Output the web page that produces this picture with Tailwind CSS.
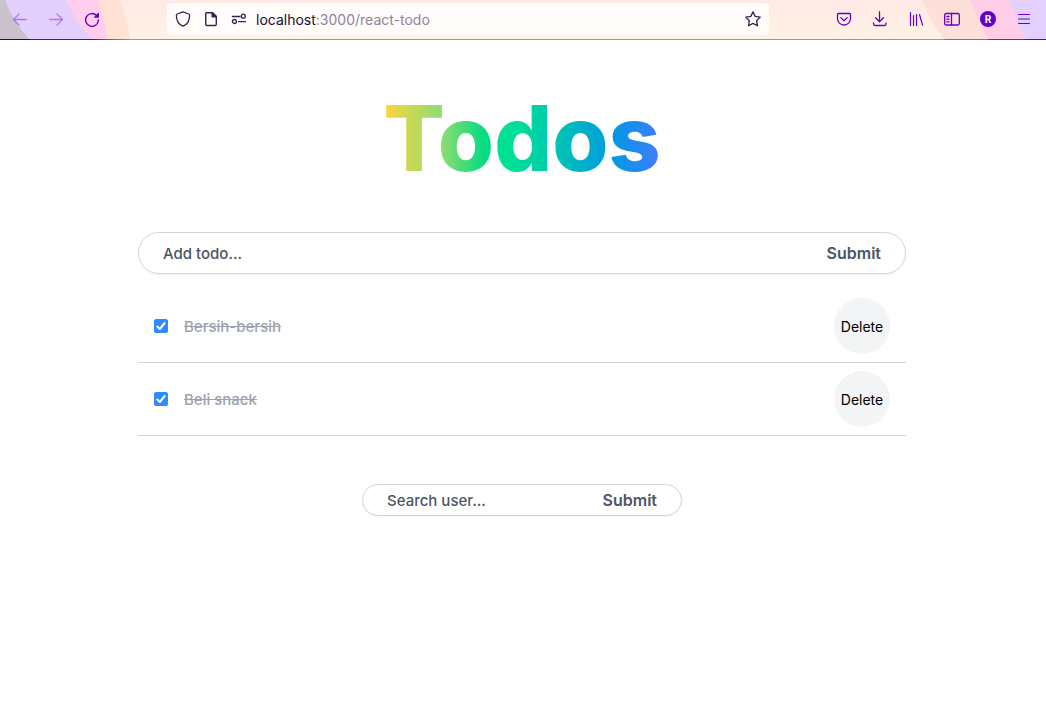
<!DOCTYPE html>
<html lang="en">
<head>
<meta charset="utf-8">
<meta name="viewport" content="width=device-width, initial-scale=1">
<title>Todos</title>
<script src="https://cdn.jsdelivr.net/npm/@tailwindcss/browser@4"></script>
</head>
<body class="min-h-screen bg-white font-['Inter','Liberation_Sans',sans-serif]">
<header class="relative h-10 bg-linear-to-b from-[#ffe9e6] to-[#fff3e4]">
  <svg class="absolute left-0 top-0" width="130" height="40" viewBox="0 0 130 40" aria-hidden="true">
    <path d="M0 0H119Q127 18 130 40H0Z" fill="#ffe2d4"/>
    <path d="M0 0H97Q105 18 107 40H0Z" fill="#ffd0e0"/>
    <path d="M0 0H66Q76 22 93 40H0Z" fill="#e3cffb"/>
    <path d="M66 0H97Q105 18 107 40H93Q76 22 66 0Z" fill="#ffcdee"/>
    <path d="M0 0H5Q13 22 30 40H0Z" fill="#c9c1cb"/>
  </svg>
  <svg class="absolute right-0 top-0" width="126" height="40" viewBox="0 0 126 40" aria-hidden="true">
    <path d="M2 0H126V40H25Q10 23 2 0Z" fill="#ffdfd9"/>
    <path d="M51 0H126V40H69Q58 22 51 0Z" fill="#ffcde8"/>
    <path d="M90 0H126V40H106Q96 22 90 0Z" fill="#e4d0ff"/>
  </svg>
  <div class="absolute inset-x-0 bottom-0 h-px bg-[linear-gradient(90deg,#20142b_0_30px,#6a00b4_31px_92px,#a83a7c_107px,#bd8a74_130px_calc(100%-102px),#c4566a_calc(100%-100px)_calc(100%-60px),#c4007c_calc(100%-56px)_calc(100%-22px),#6a00b4_calc(100%-20px))]"></div>
  <div class="relative flex h-[38px] items-center pl-0.5 pr-1 text-[#6200cc]">
    <nav class="flex" aria-label="History">
      <button class="flex h-8 w-9 items-center justify-center opacity-40" aria-label="Back"><svg width="16" height="16" viewBox="0 0 16 16" fill="none" stroke="currentColor" stroke-width="1.3" stroke-linecap="round" stroke-linejoin="round"><path d="M14.5 8.5H1.5M7 3L1.5 8.5L7 14"/></svg></button>
      <button class="flex h-8 w-9 items-center justify-center opacity-40" aria-label="Forward"><svg width="16" height="16" viewBox="0 0 16 16" fill="none" stroke="currentColor" stroke-width="1.3" stroke-linecap="round" stroke-linejoin="round"><path d="M1.5 8.5H14.5M9 3L14.5 8.5L9 14"/></svg></button>
      <button class="flex h-8 w-9 items-center justify-center" aria-label="Reload"><svg width="16" height="16" viewBox="0 0 16 16" fill="none" stroke="currentColor" stroke-width="1.4" stroke-linecap="round"><path d="M12.6 4.5A6.4 6.4 0 1 0 14.4 9"/><path d="M15 2.2V6.2Q15 6.8 14.4 6.8H10.4Q9.5 6.6 10.1 5.9L14 2Q14.8 1.4 15 2.2Z" fill="currentColor" stroke="none"/></svg></button>
    </nav>
    <div class="mx-[57px] flex h-8 min-w-0 flex-1 items-center rounded bg-[#fffcfa] px-0.5 text-[#3a2050]">
      <button class="flex h-7 w-7 items-center justify-center" aria-label="Tracking protection"><svg width="16" height="16" viewBox="0 0 16 16" fill="none" stroke="currentColor" stroke-width="1.3" stroke-linejoin="round"><path d="M8 .9L13.7 3Q14.6 3.3 14.6 4.4C14.6 9.5 12.4 13.4 8 15.2C3.6 13.4 1.4 9.5 1.4 4.4Q1.4 3.3 2.3 3Z"/></svg></button>
      <button class="flex h-7 w-7 items-center justify-center" aria-label="Site information"><svg width="16" height="16" viewBox="0 0 16 16" fill="none" stroke="currentColor" stroke-width="1.4" stroke-linejoin="round"><path d="M3.7 1.7H9.6L13.3 5.4V13.3Q13.3 14.5 12.1 14.5H3.9Q2.7 14.5 2.7 13.3V2.7Q2.7 1.7 3.7 1.7Z"/><path d="M9.2 1.5V5.8H13.5Z" fill="currentColor"/></svg></button>
      <button class="flex h-7 w-7 items-center justify-center" aria-label="Permissions"><svg width="16" height="16" viewBox="0 0 16 16" fill="none" stroke="currentColor" stroke-width="1.3" stroke-linecap="round"><path d="M1.5 5.5H9M7.5 10.7H14.5"/><circle cx="12.3" cy="5.2" r="2"/><circle cx="3.4" cy="10.5" r="2"/></svg></button>
      <a href="#" class="ml-[3px] flex-1 truncate pt-0.5 text-sm text-[#8f839d]"><span class="text-[#180a38]">localhost</span>:3000/react-todo</a>
      <button class="flex h-7 w-7 items-center justify-center" aria-label="Bookmark this page"><svg width="16" height="16" viewBox="0 0 16 16" fill="none" stroke="currentColor" stroke-width="1.3" stroke-linejoin="round"><path d="M8 .9L10.2 5.4L15.2 6.1L11.6 9.7L12.5 14.8L8 12.4L3.5 14.8L4.4 9.7L.8 6.1L5.8 5.4Z"/></svg></button>
    </div>
    <div class="flex">
      <button class="flex h-8 w-9 items-center justify-center" aria-label="Save to Pocket"><svg width="16" height="16" viewBox="0 0 16 16" fill="none" stroke="currentColor" stroke-width="1.3" stroke-linecap="round" stroke-linejoin="round"><path d="M2.5 2.5H13.5Q14.5 2.5 14.5 3.5V7.5A6.5 6.5 0 0 1 1.5 7.5V3.5Q1.5 2.5 2.5 2.5ZM4.8 6.6L8 9.7L11.2 6.6"/></svg></button>
      <button class="flex h-8 w-9 items-center justify-center" aria-label="Downloads"><svg width="16" height="16" viewBox="0 0 16 16" fill="none" stroke="currentColor" stroke-width="1.3" stroke-linecap="round" stroke-linejoin="round"><path d="M7.5 .7V10.5M3.5 6.7L7.5 10.7L11.5 6.7M1.5 12V13Q1.5 14.5 3 14.5H12.5Q14 14.5 14 13V12"/></svg></button>
      <button class="flex h-8 w-9 items-center justify-center" aria-label="Library"><svg width="16" height="16" viewBox="0 0 16 16" fill="none" stroke="currentColor" stroke-width="1.2" stroke-linecap="round"><path d="M2.5 1.5V14.5M5.5 4.5V14.5M8.5 3.5V14.5M11.5 3.5L14.5 14.2"/></svg></button>
      <button class="flex h-8 w-9 items-center justify-center" aria-label="Sidebars"><svg width="16" height="16" viewBox="0 0 16 16" fill="none" stroke="currentColor" stroke-width="1.3" stroke-linecap="round"><rect x=".7" y="2.5" width="14.6" height="11.5" rx="1.5"/><path d="M7.5 2.5V14M2.9 5.5H5M2.9 8.2H5M2.9 10.9H5"/></svg></button>
      <button class="flex h-8 w-9 items-center justify-center" aria-label="Account"><span class="flex h-4 w-4 items-center justify-center rounded-full bg-[#6200cc] text-[10px] font-bold leading-none text-white">R</span></button>
      <button class="flex h-8 w-9 items-center justify-center" aria-label="Menu"><svg width="16" height="16" viewBox="0 0 16 16" fill="none" stroke="currentColor" stroke-width="1.2" stroke-linecap="round"><path d="M2.5 3.5H13.5M2.5 8H13.5M2.5 12.5H13.5"/></svg></button>
    </div>
  </div>
</header>

<main class="mx-auto flex max-w-[770px] flex-col items-center pr-0.5 pt-12">
  <h1 class="bg-[linear-gradient(90deg,#ffd53d_0%,#8fdc70_21%,#00dc82_37%,#00e095_45%,#00cfaa_58%,#009ae0_82%,#437bff_100%)] bg-clip-text text-[91px] font-extrabold leading-25 text-transparent">Todos</h1>

  <form class="mt-11 flex w-full items-center rounded-full border border-[#d1d5db] px-6 py-2 text-base text-[#4b5563] shadow-[0_1px_2px_rgba(0,0,0,0.05)]">
    <input type="text" aria-label="Add todo" placeholder="Add todo..." class="min-w-0 flex-1 pt-0.5 text-[15px] leading-5 font-medium outline-none placeholder:text-[#4b5563]">
    <button type="submit" class="font-semibold">Submit</button>
  </form>

  <ul class="mt-4 w-full">
    <li class="flex items-center border-b border-[#d1d5db] px-4 py-2">
      <span class="grid">
        <input id="todo-1" type="checkbox" checked class="peer col-start-1 row-start-1 h-3.5 w-3.5 appearance-none rounded-xs border border-[#767676] checked:border-[#2e8bff] checked:bg-[#2e8bff]">
        <svg class="pointer-events-none invisible col-start-1 row-start-1 peer-checked:visible" width="14" height="14" viewBox="0 0 14 14" fill="none" stroke="white" stroke-width="2" stroke-linecap="round" stroke-linejoin="round" aria-hidden="true"><path d="M3.3 7.5L5.8 10L10.7 4"/></svg>
      </span>
      <label for="todo-1" class="ml-4 flex-1 pt-0.5 text-[15px] leading-5 font-medium text-[#9ca3af] line-through">Bersih-bersih</label>
      <button type="button" class="h-14 w-14 rounded-full bg-[#f3f4f6] pt-0.5 text-sm text-black">Delete</button>
    </li>
    <li class="flex items-center border-b border-[#d1d5db] px-4 py-2">
      <span class="grid">
        <input id="todo-2" type="checkbox" checked class="peer col-start-1 row-start-1 h-3.5 w-3.5 appearance-none rounded-xs border border-[#767676] checked:border-[#2e8bff] checked:bg-[#2e8bff]">
        <svg class="pointer-events-none invisible col-start-1 row-start-1 peer-checked:visible" width="14" height="14" viewBox="0 0 14 14" fill="none" stroke="white" stroke-width="2" stroke-linecap="round" stroke-linejoin="round" aria-hidden="true"><path d="M3.3 7.5L5.8 10L10.7 4"/></svg>
      </span>
      <label for="todo-2" class="ml-4 flex-1 pt-0.5 text-[15px] leading-5 font-medium text-[#9ca3af] line-through">Beli snack</label>
      <button type="button" class="h-14 w-14 rounded-full bg-[#f3f4f6] pt-0.5 text-sm text-black">Delete</button>
    </li>
  </ul>

  <form class="mt-12 flex h-8 w-80 max-w-full items-center rounded-full border border-[#d1d5db] px-6 text-base text-[#4b5563] shadow-[0_1px_2px_rgba(0,0,0,0.05)]">
    <input type="text" aria-label="Search user" placeholder="Search user..." class="min-w-0 flex-1 pt-0.5 text-[15px] leading-5 font-medium outline-none placeholder:text-[#4b5563]">
    <button type="submit" class="font-semibold">Submit</button>
  </form>
</main>
</body>
</html>
